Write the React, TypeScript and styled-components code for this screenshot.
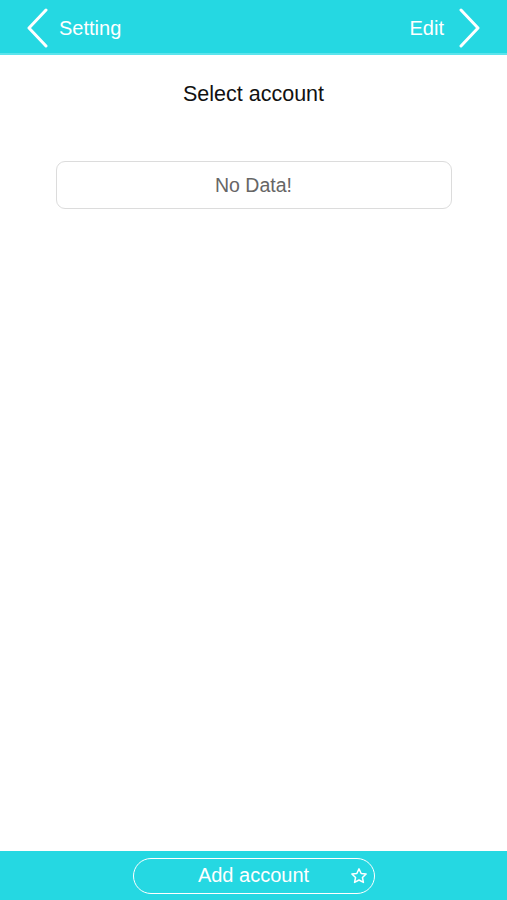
import React from "react";
import styled, { createGlobalStyle } from "styled-components";

const Global = createGlobalStyle`
  html, body { margin: 0; padding: 0; background: #fff; }
  body { font-family: "Liberation Sans", Arial, sans-serif; }
  #root { height: 900px; }
`;

const Page = styled.div`
  width: 507px;
  height: 900px;
  display: flex;
  flex-direction: column;
  background: #fff;
`;

const Header = styled.header`
  height: 55px;
  box-sizing: border-box;
  flex: none;
  background: #25d8e2;
  border-bottom: 2px solid #5ce4ec;
  display: flex;
  align-items: center;
  justify-content: space-between;
  padding: 3px 26px 0 26px;
  color: #fff;
`;

const NavButton = styled.div<{ $gap: number }>`
  display: flex;
  align-items: center;
  gap: ${(p) => p.$gap}px;
  font-size: 20px;
  color: #fff;
`;

const Main = styled.main`
  flex: 1;
  display: flex;
  flex-direction: column;
  align-items: center;
  padding-top: 26px;
`;

const Title = styled.h1`
  margin: 0;
  font-size: 21.5px;
  font-weight: normal;
  color: #111;
  line-height: 26px;
`;

const EmptyBox = styled.div`
  margin-top: 54px;
  width: 394px;
  height: 46px;
  border: 1px solid #dcdcdc;
  border-radius: 9px;
  display: flex;
  align-items: center;
  justify-content: center;
  font-size: 19.5px;
  color: #666;
`;

const Footer = styled.footer`
  height: 49px;
  flex: none;
  background: #25d8e2;
  display: flex;
  align-items: center;
  justify-content: center;
`;

const AddButton = styled.div`
  position: relative;
  width: 240px;
  height: 34px;
  border: 1.5px solid #fff;
  border-radius: 18px;
  display: flex;
  align-items: center;
  justify-content: center;
  color: #fff;
  font-size: 20px;
`;

const StarIcon = styled.svg`
  position: absolute;
  right: 6px;
  top: 50%;
  transform: translateY(-50%);
`;

const Chevron = ({ dir }: { dir: "left" | "right" }) => (
  <svg width="22" height="40" viewBox="0 0 22 40">
    <path
      d={dir === "left" ? "M20 2 L3 20 L20 38" : "M2 2 L19 20 L2 38"}
      fill="none"
      stroke="#fff"
      strokeWidth="3"
      strokeLinecap="round"
      strokeLinejoin="round"
    />
  </svg>
);

export default function App() {
  return (
    <Page>
      <Global />
      <Header>
        <NavButton $gap={11}>
          <Chevron dir="left" />
          <span>Setting</span>
        </NavButton>
        <NavButton $gap={15}>
          <span>Edit</span>
          <Chevron dir="right" />
        </NavButton>
      </Header>
      <Main>
        <Title>Select account</Title>
        <EmptyBox>No Data!</EmptyBox>
      </Main>
      <Footer>
        <AddButton>
          Add account
          <StarIcon width="18" height="18" viewBox="0 0 24 24">
            <path
              d="M12 2.5l2.9 6.1 6.6.8-4.9 4.6 1.3 6.6L12 17.3l-5.9 3.3 1.3-6.6-4.9-4.6 6.6-.8z"
              fill="none"
              stroke="#fff"
              strokeWidth="2"
              strokeLinejoin="round"
            />
          </StarIcon>
        </AddButton>
      </Footer>
    </Page>
  );
}
